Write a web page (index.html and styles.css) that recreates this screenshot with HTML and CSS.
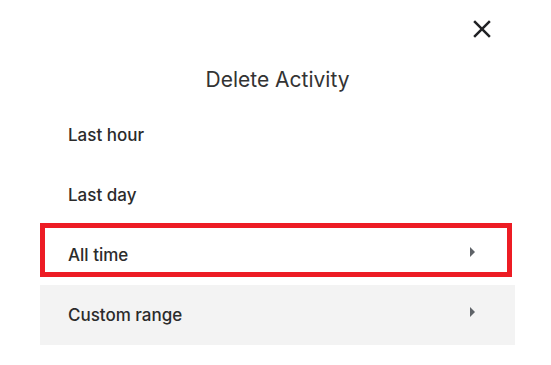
FILE: index.html
```html
<!DOCTYPE html>
<html lang="en">
<head>
    <meta charset="UTF-8">
    <meta name="viewport" content="width=device-width, initial-scale=1.0">
    <title>Delete Activity</title>
    <link rel="stylesheet" href="styles.css">
</head>
<body>

<div class="dialog">
    <div class="dialog-top">
        <button class="close-btn" aria-label="Close">
            <svg viewBox="0 0 24 24" width="30" height="30">
                <path d="M19 6.41L17.59 5 12 10.59 6.41 5 5 6.41 10.59 12 5 17.59 6.41 19 12 13.41 17.59 19 19 17.59 13.41 12z" fill="#202124"/>
            </svg>
        </button>
    </div>
    <h2 class="dialog-title">Delete Activity</h2>

    <div class="options">
        <div class="option">Last hour</div>
        <div class="option">Last day</div>
        <div class="option option-marked">
            All time
            <span class="arrow"></span>
        </div>
        <div class="option option-hover">
            Custom range
            <span class="arrow"></span>
        </div>
    </div>
</div>

</body>
</html>
```

FILE: styles.css
```css
body {
    margin: 0;
    font-family: Inter, "Open Sans", Arial, sans-serif;
    background: #ffffff;
    color: #2b2b2b;
}

.dialog {
    width: 475px;
    margin-left: 40px;
}

.dialog-top {
    height: 66px;
    display: flex;
    justify-content: flex-end;
    align-items: flex-start;
    padding-right: 18px;
}

.close-btn {
    margin-top: 14px;
    width: 30px;
    height: 30px;
    padding: 0;
    border: none;
    background: none;
    cursor: pointer;
}

.close-btn svg {
    display: block;
}

.dialog-title {
    margin: 0 0 11px;
    font-size: 21px;
    font-weight: 400;
    line-height: 28px;
    text-align: center;
    color: #333333;
}

.option {
    height: 60px;
    display: flex;
    align-items: center;
    justify-content: space-between;
    padding: 0 40px 0 28px;
    font-size: 17px;
    font-weight: 500;
    position: relative;
}

.option-hover {
    background-color: #f3f3f3;
}

/* red annotation box */
.option-marked::after {
    content: "";
    position: absolute;
    top: -2px;
    left: 0;
    right: 3px;
    bottom: 8px;
    border: 5px solid #ed1c24;
}

.arrow {
    width: 0;
    height: 0;
    margin-top: -6px;
    border-left: 5px solid #5f6368;
    border-top: 5px solid transparent;
    border-bottom: 5px solid transparent;
}
```
